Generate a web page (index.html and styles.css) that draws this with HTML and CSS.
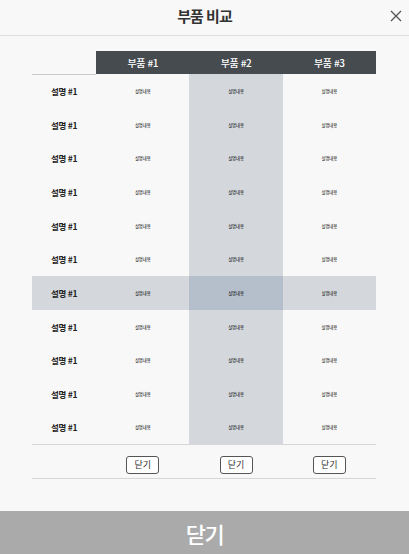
FILE: index.html
```html
<!DOCTYPE html>
<html lang="ko">
<head>
<meta charset="utf-8">
<link rel="stylesheet" href="styles.css">
</head>
<body>
<div class="modal">
  <header class="head">
    <h1 class="title">부품 비교</h1>
    <button class="close" aria-label="닫기">
      <svg width="12" height="12" viewBox="0 0 12 12"><path d="M1 1L11 11M11 1L1 11" stroke="#555" stroke-width="1.3" fill="none"/></svg>
    </button>
  </header>
  <main class="body">
    <table class="cmp">
      <thead>
        <tr><th class="blank"></th><th>부품 #1</th><th>부품 #2</th><th>부품 #3</th></tr>
      </thead>
      <tbody>
        <tr><th>설명 #1</th><td>설명내용</td><td class="sel">설명내용</td><td>설명내용</td></tr>
        <tr><th>설명 #1</th><td>설명내용</td><td class="sel">설명내용</td><td>설명내용</td></tr>
        <tr><th>설명 #1</th><td>설명내용</td><td class="sel">설명내용</td><td>설명내용</td></tr>
        <tr><th>설명 #1</th><td>설명내용</td><td class="sel">설명내용</td><td>설명내용</td></tr>
        <tr><th>설명 #1</th><td>설명내용</td><td class="sel">설명내용</td><td>설명내용</td></tr>
        <tr><th>설명 #1</th><td>설명내용</td><td class="sel">설명내용</td><td>설명내용</td></tr>
        <tr class="hl"><th>설명 #1</th><td>설명내용</td><td class="sel">설명내용</td><td>설명내용</td></tr>
        <tr><th>설명 #1</th><td>설명내용</td><td class="sel">설명내용</td><td>설명내용</td></tr>
        <tr><th>설명 #1</th><td>설명내용</td><td class="sel">설명내용</td><td>설명내용</td></tr>
        <tr><th>설명 #1</th><td>설명내용</td><td class="sel">설명내용</td><td>설명내용</td></tr>
        <tr><th>설명 #1</th><td>설명내용</td><td class="sel">설명내용</td><td>설명내용</td></tr>
      </tbody>
      <tfoot>
        <tr><th></th><td><button class="sbtn">닫기</button></td><td><button class="sbtn">닫기</button></td><td><button class="sbtn">닫기</button></td></tr>
      </tfoot>
    </table>
  </main>
  <footer class="foot">
    <button class="big">닫기</button>
  </footer>
</div>
</body>
</html>
```
FILE: styles.css
```css
* { box-sizing: border-box; }
html, body { margin: 0; padding: 0; }
body {
  width: 409px;
  height: 554px;
  background: #f8f8f8;
  font-family: "Noto Sans CJK KR", "Noto Sans", sans-serif;
  color: #222;
  overflow: hidden;
}
.modal {
  display: flex;
  flex-direction: column;
  height: 554px;
}
.head {
  height: 36px;
  border-bottom: 1px solid #dedede;
  display: flex;
  align-items: center;
  justify-content: center;
  position: relative;
}
.title {
  margin: 0;
  font-size: 15px;
  letter-spacing: -1px;
  font-weight: 700;
  color: #333;
  line-height: 1;
  margin-top: -4px;
}
.close {
  position: absolute;
  right: 7px;
  top: 10px;
  width: 12px;
  height: 12px;
  padding: 0;
  border: 0;
  background: none;
  display: flex;
}
.body {
  flex: 1;
  padding: 15px 33px 0 32px;
}
.cmp {
  width: 344px;
  border-collapse: collapse;
  table-layout: fixed;
}
.cmp th, .cmp td {
  padding: 0;
  text-align: center;
}
.cmp thead th {
  height: 23px;
  background: #464b50;
  color: #fff;
  font-size: 10px;
  letter-spacing: -0.4px;
  font-weight: 500;
  width: 93px;
}
.cmp thead th.blank {
  width: 64px;
  background: transparent;
  border-bottom: 1px solid #c8cacc;
}
.cmp tbody tr { height: 33.7px; }
.cmp tbody th {
  font-size: 8.5px;
  letter-spacing: -0.4px;
  font-weight: 700;
  color: #222;
}
.cmp tbody td {
  font-size: 4.3px;
  font-weight: 400;
  color: #000;
}
.cmp td.sel { background: #d4d8dc; }
.cmp tr.hl { background: #d4d8dc; }
.cmp tr.hl td.sel { background: #b5bfcb; }
.cmp tfoot tr {
  height: 34px;
  border-top: 1px solid #d6d6d6;
  border-bottom: 1px solid #d6d6d6;
}
.sbtn {
  width: 33px;
  height: 18px;
  padding: 0;
  border: 1px solid #555;
  border-radius: 3px;
  background: #fff;
  font-family: inherit;
  font-size: 9px;
  color: #333;
  line-height: 1;
}
.foot {
  height: 43px;
  background: #aaaaaa;
  display: flex;
}
.big {
  flex: 1;
  border: 0;
  background: transparent;
  color: #fff;
  font-family: inherit;
  font-size: 22px;
  letter-spacing: -1.5px;
  font-weight: 500;
  padding: 0;
}
```
